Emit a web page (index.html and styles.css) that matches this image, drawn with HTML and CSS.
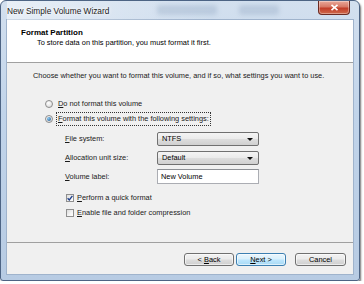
FILE: index.html
```html
<!DOCTYPE html>
<html lang="en">
<head>
    <meta charset="UTF-8">
    <title>New Simple Volume Wizard</title>
    <link rel="stylesheet" href="styles.css">
</head>
<body>
    <div class="window">
        <div class="titlebar">
            <span class="title">New Simple Volume Wizard</span>
            <span class="ghost ghost-a"></span>
            <span class="ghost ghost-b"></span>
            <button class="close" aria-label="Close">
                <svg width="9" height="7" viewBox="0 0 9 7"><path d="M1.5 0.8 L7.5 6.2 M7.5 0.8 L1.5 6.2" stroke="#fff" stroke-width="1.6" fill="none"/></svg>
            </button>
        </div>

        <div class="client">
            <header class="header">
                <h1>Format Partition</h1>
                <p>To store data on this partition, you must format it first.</p>
            </header>

            <section class="content">
                <p class="intro">Choose whether you want to format this volume, and if so, what settings you want to use.</p>

                <div class="option">
                    <span class="radio"></span>
                    <span><u>D</u>o not format this volume</span>
                </div>
                <div class="option">
                    <span class="radio checked"></span>
                    <span class="focused"><u>F</u>ormat this volume with the following settings:</span>
                </div>

                <div class="settings">
                    <div class="field">
                        <span class="label"><u>F</u>ile system:</span>
                        <div class="combo">NTFS</div>
                    </div>
                    <div class="field">
                        <span class="label"><u>A</u>llocation unit size:</span>
                        <div class="combo">Default</div>
                    </div>
                    <div class="field">
                        <span class="label"><u>V</u>olume label:</span>
                        <div class="textbox">New Volume</div>
                    </div>
                </div>

                <div class="checks">
                    <div class="check-row">
                        <span class="checkbox checked">
                            <svg width="6" height="6" viewBox="0 0 6 6"><path d="M0.6 3.2 L2.3 5 L5.4 0.8" stroke="#1f3f8a" stroke-width="1.3" fill="none"/></svg>
                        </span>
                        <span><u>P</u>erform a quick format</span>
                    </div>
                    <div class="check-row">
                        <span class="checkbox"></span>
                        <span><u>E</u>nable file and folder compression</span>
                    </div>
                </div>
            </section>

            <footer class="footer">
                <button class="btn">&lt; <u>B</u>ack</button>
                <button class="btn btn-default"><u>N</u>ext &gt;</button>
                <button class="btn btn-cancel">Cancel</button>
            </footer>
        </div>
    </div>
</body>
</html>
```

FILE: styles.css
```css
* {
    margin: 0;
    padding: 0;
    box-sizing: border-box;
}

body {
    background: #fff;
    font-family: 'Liberation Sans', Arial, sans-serif;
    font-size: 7.4px;
    color: #1a1a1a;
}

u {
    text-decoration: underline;
    text-underline-offset: 1px;
}

.window {
    width: 360px;
    height: 281px;
    padding: 0 6px 6px 6px;
    border: 1px solid #4d6484;
    border-radius: 6px 6px 3px 3px;
    background: linear-gradient(180deg, #d3e0ef 0%, #c1d4ea 40%, #b7cbe3 100%);
    box-shadow: 1px 2px 2px rgba(0,0,0,0.55);
    display: flex;
    flex-direction: column;
}

/* title bar */
.titlebar {
    height: 19px;
    position: relative;
    display: flex;
    align-items: center;
    background:
        linear-gradient(90deg, rgba(255,255,255,0.5) 0%, rgba(255,255,255,0.15) 35%, rgba(255,255,255,0) 60%);
}

.title {
    font-size: 8.3px;
    color: #1a1a1a;
    text-shadow: 0 0 4px #fff, 0 0 2px #fff;
    position: relative;
    z-index: 1;
}

.ghost {
    position: absolute;
    top: 4px;
    height: 10px;
    border-radius: 3px;
    background: rgba(120,145,175,0.25);
    filter: blur(2px);
}

.ghost-a { left: 150px; width: 60px; }
.ghost-b { left: 232px; width: 40px; }

.close {
    position: absolute;
    right: 3px;
    top: 0;
    width: 32px;
    height: 14px;
    border: 1px solid #6b2a22;
    border-top: none;
    border-radius: 0 0 4px 4px;
    background: linear-gradient(180deg, #e9a99a 0%, #d77865 45%, #c23d28 55%, #cf6a4c 100%);
    box-shadow: inset 0 0 0 1px rgba(255,255,255,0.35);
    display: flex;
    align-items: center;
    justify-content: center;
}

/* client area */
.client {
    flex: 1;
    display: flex;
    flex-direction: column;
    background: #f0f0f0;
    box-shadow: 0 0 0 1px #9fb3cc;
}

.header {
    height: 43px;
    background: #fff;
    border-bottom: 1px solid #a0a0a0;
    padding: 8px 0 0 14px;
    line-height: 10px;
}

.header h1 {
    font-size: 8px;
    font-weight: bold;
    color: #000;
}

.header p {
    padding-left: 16px;
    color: #000;
}

.content {
    flex: 1;
    padding: 8px 0 0 26px;
    line-height: 10px;
}

.intro {
    margin-bottom: 15px;
}

.option {
    height: 15px;
    display: flex;
    align-items: center;
    gap: 5px;
    padding-left: 12px;
}

.radio {
    width: 8px;
    height: 8px;
    border-radius: 50%;
    border: 1px solid #8c8c8c;
    background: radial-gradient(circle at 40% 35%, #fff 0%, #e6e6e6 60%, #cfcfcf 100%);
    position: relative;
}

.radio.checked::after {
    content: '';
    position: absolute;
    left: 1px;
    top: 1px;
    width: 4px;
    height: 4px;
    border-radius: 50%;
    background: radial-gradient(circle at 35% 35%, #8fcaf0, #14508f);
}

.focused {
    outline: 1px dotted #333;
    outline-offset: 1px;
}

.settings {
    margin-top: 3px;
    padding-left: 32px;
}

.field {
    height: 19px;
    display: flex;
    align-items: center;
}

.label {
    width: 92px;
}

.combo {
    width: 102px;
    height: 14px;
    border: 1px solid #707070;
    border-radius: 2px;
    background: linear-gradient(180deg, #f4f4f4 0%, #ebebeb 48%, #dddddd 52%, #d0d0d0 100%);
    padding-left: 4px;
    display: flex;
    align-items: center;
    position: relative;
    color: #000;
}

.combo::after {
    content: '';
    position: absolute;
    right: 5px;
    top: 5px;
    border-left: 3px solid transparent;
    border-right: 3px solid transparent;
    border-top: 3px solid #111;
}

.textbox {
    width: 102px;
    height: 15px;
    border: 1px solid #abadb3;
    border-top-color: #8d9095;
    background: #fff;
    padding-left: 3px;
    display: flex;
    align-items: center;
    color: #000;
}

.checks {
    margin-top: 4px;
    padding-left: 33px;
}

.check-row {
    height: 15px;
    display: flex;
    align-items: center;
    gap: 3px;
}

.checkbox {
    width: 8px;
    height: 8px;
    border: 1px solid #8f8f8f;
    background: linear-gradient(135deg, #dcdcdc 0%, #f4f4f4 60%, #fff 100%);
    display: flex;
    align-items: center;
    justify-content: center;
}

/* buttons */
.footer {
    height: 32px;
    border-top: 1px solid #a0a0a0;
    display: flex;
    justify-content: flex-end;
    align-items: flex-start;
    padding: 10px 7px 0 0;
    gap: 2px;
}

.btn {
    width: 50px;
    height: 13px;
    border: 1px solid #707070;
    border-radius: 3px;
    background: linear-gradient(180deg, #f2f2f2 0%, #ebebeb 48%, #dddddd 52%, #cfcfcf 100%);
    box-shadow: inset 0 0 0 1px rgba(255,255,255,0.6);
    font-family: inherit;
    font-size: 7.4px;
    color: #000;
    line-height: 10px;
}

.btn-default {
    border-color: #3c7fb1;
    background: linear-gradient(180deg, #eaf6fd 0%, #d9f0fc 48%, #bee6fd 52%, #a7d9f5 100%);
}

.btn-cancel {
    width: 51px;
    margin-left: 7px;
}
```
